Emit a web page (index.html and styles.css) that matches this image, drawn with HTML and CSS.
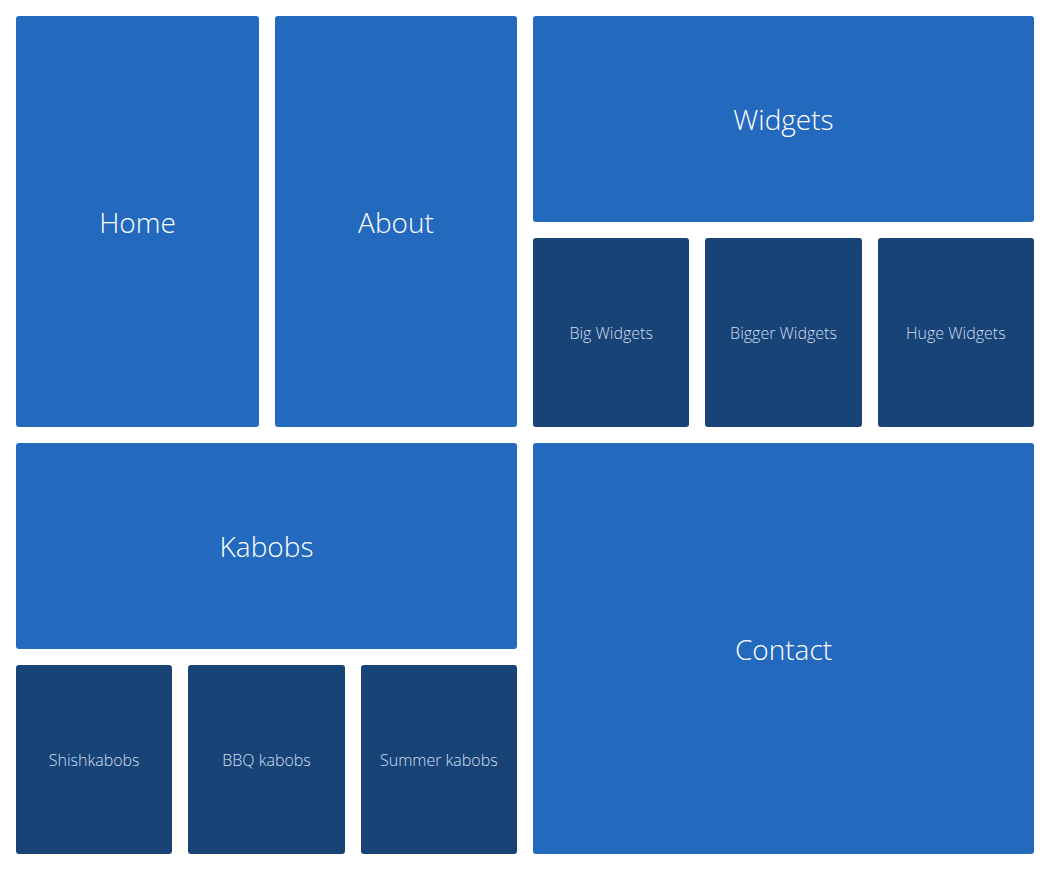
FILE: index.html
```html
<!DOCTYPE html>
<html lang="en">
<head>
    <meta charset="UTF-8">
    <meta name="viewport" content="width=device-width, initial-scale=1.0">
    <title>Tiles</title>
    <link rel="stylesheet" href="styles.css">
</head>
<body>
    <div class="tiles">
        <div class="pair">
            <a class="tile" href="#">Home</a>
            <a class="tile" href="#">About</a>
        </div>
        <div class="group">
            <a class="tile" href="#">Widgets</a>
            <div class="subs">
                <a class="tile sub" href="#">Big Widgets</a>
                <a class="tile sub" href="#">Bigger Widgets</a>
                <a class="tile sub" href="#">Huge Widgets</a>
            </div>
        </div>
        <div class="group">
            <a class="tile" href="#">Kabobs</a>
            <div class="subs">
                <a class="tile sub" href="#">Shishkabobs</a>
                <a class="tile sub" href="#">BBQ kabobs</a>
                <a class="tile sub" href="#">Summer kabobs</a>
            </div>
        </div>
        <a class="tile" href="#">Contact</a>
    </div>
</body>
</html>
```
FILE: styles.css
```css
body {
    font-family: "Open Sans", Arial, sans-serif;
    margin: 0;
    padding: 16px;
    background-color: #fff;
}

.tiles {
    width: 1018px;
    display: grid;
    grid-template-columns: 501px 501px;
    grid-template-rows: 411px 411px;
    column-gap: 16px;
    row-gap: 16px;
}

.pair {
    display: grid;
    grid-template-columns: 243px 242px;
    column-gap: 16px;
}

.group {
    display: grid;
    grid-template-rows: 206px 189px;
    row-gap: 16px;
}

.subs {
    display: grid;
    grid-template-columns: 1fr 1fr 1fr;
    column-gap: 16px;
}

.tile {
    display: flex;
    justify-content: center;
    align-items: center;
    background-color: #2369bd;
    color: #fff;
    text-decoration: none;
    font-weight: 300;
    font-size: 28px;
    border-radius: 3px;
}

.sub {
    background-color: #174377;
    color: #d2dff0;
    font-size: 16px;
}
```
